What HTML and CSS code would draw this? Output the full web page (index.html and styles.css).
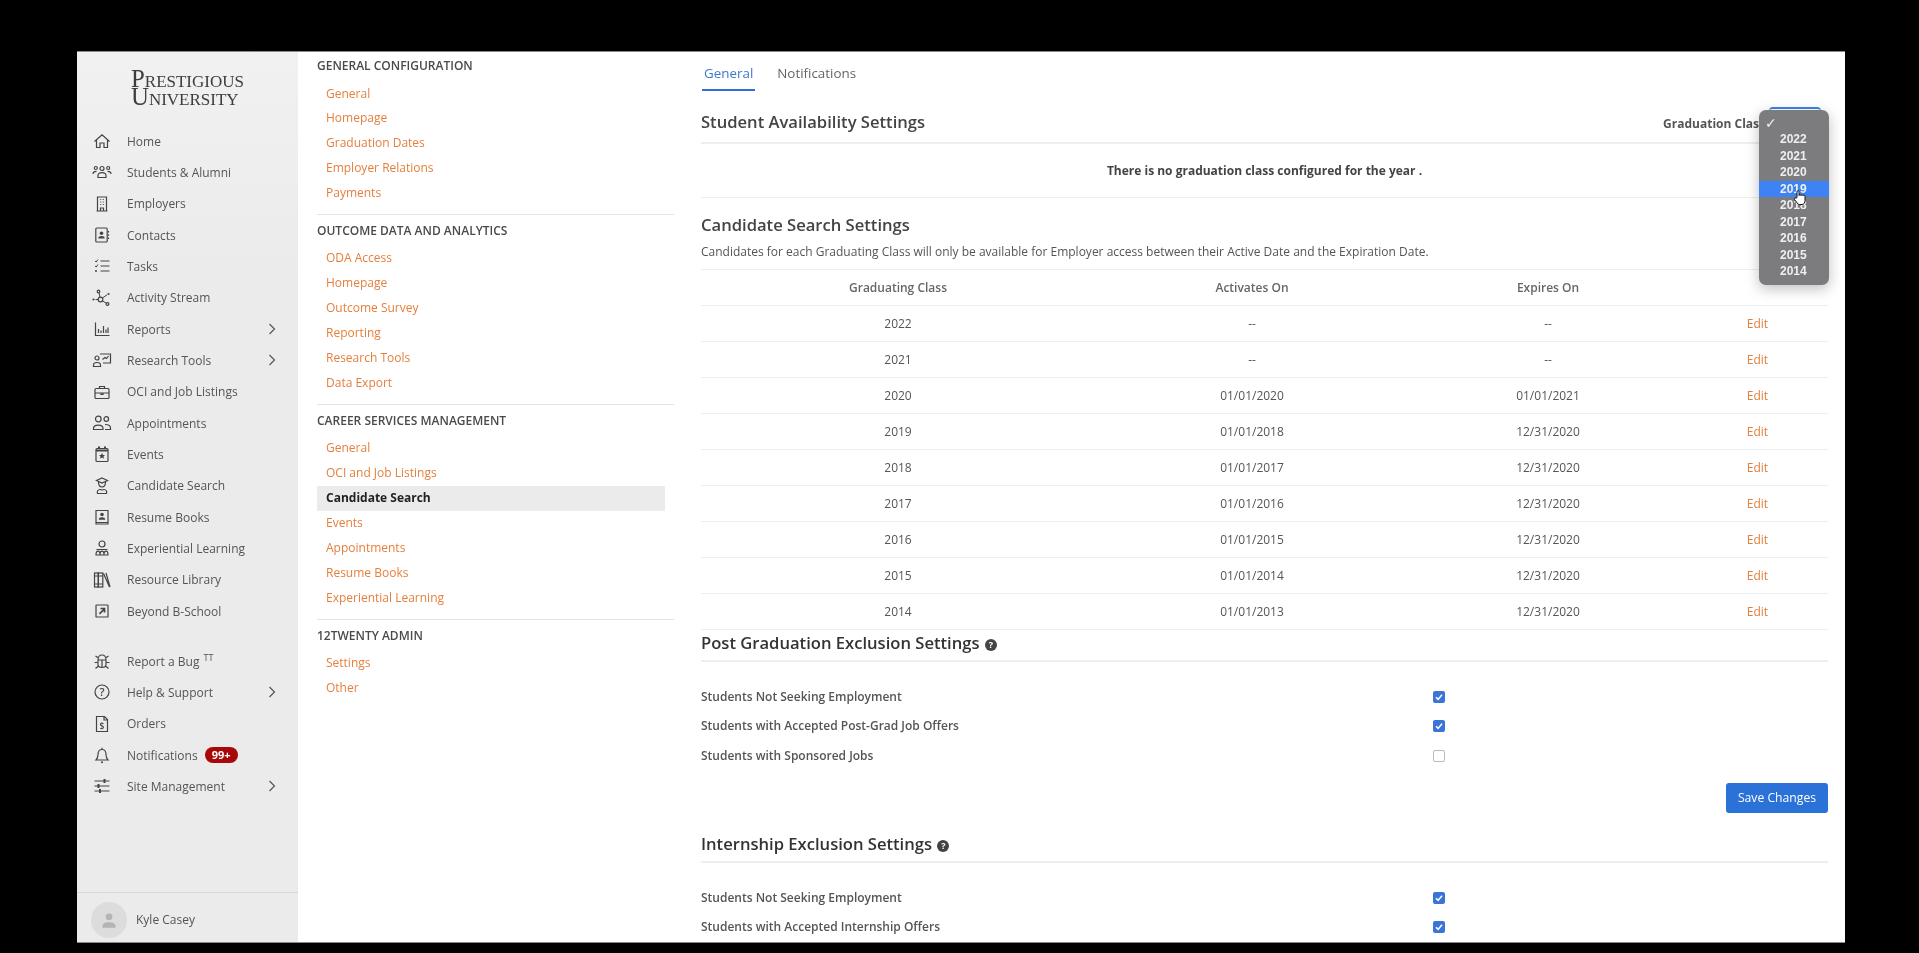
FILE: index.html
```html
<!DOCTYPE html>
<html lang="en">
<head>
    <meta charset="UTF-8">
    <title>Candidate Search Settings</title>
    <link rel="stylesheet" href="styles.css">
</head>
<body>
    <svg class="sprite" xmlns="http://www.w3.org/2000/svg">
        <symbol id="i-home" viewBox="0 0 20 20"><path d="M2.500 10.500L10 3.800l7.500 6.700M4.500 9v7.500H8V12h4v4.500h3.500V9"/></symbol>
        <symbol id="i-students" viewBox="0 0 20 20"><circle cx="10" cy="6.500" r="2"/><circle cx="3.800" cy="6" r="1.500"/><circle cx="16.200" cy="6" r="1.500"/><path d="M6 15.500v-1.800c0-2 2-3 4-3s4 1 4 3v1.800zM1 12c0-1.800 1.300-2.700 3.500-2.700M19 12c0-1.800-1.300-2.700-3.500-2.700"/></symbol>
        <symbol id="i-employers" viewBox="0 0 20 20"><path d="M5.500 17V3h9v14M4.500 17h11M8.500 17v-3h3v3"/><path class="thin" d="M8.300 5.500h1M10.800 5.500h1M8.300 8h1M10.800 8h1M8.300 10.500h1M10.800 10.500h1"/></symbol>
        <symbol id="i-contacts" viewBox="0 0 20 20"><rect x="3.800" y="3" width="11.400" height="14" rx="1"/><circle class="solid" cx="9.500" cy="8.300" r="1.800"/><path class="solid" d="M6.300 13.500c0-1.800 1.300-2.500 3.200-2.500s3.200.7 3.200 2.500z"/><path d="M16.500 6v1.500M16.500 9.300v1.500M16.500 12.600v1.500"/></symbol>
        <symbol id="i-tasks" viewBox="0 0 20 20"><path d="M8.500 5h9M8.500 10h9M8.500 15h9"/><path class="thin" d="M3 5l1.200 1L6 3.500M3 10l1.200 1L6 8.500"/><circle class="solid" cx="4" cy="15" r="1"/></symbol>
        <symbol id="i-activity" viewBox="0 0 20 20"><circle cx="6.500" cy="3.500" r="1.300"/><circle cx="8.500" cy="11.500" r="2.300"/><circle cx="15.500" cy="16" r="1.400"/><circle class="solid" cx="1.500" cy="11.500" r="1.100"/><circle class="solid" cx="16.500" cy="6" r="1.100"/><path class="thin" d="M7 4.800l1 4.400M10.500 13l3.800 2.100M10.500 10l4.500-3.200M3.500 11.500h2.500"/></symbol>
        <symbol id="i-reports" viewBox="0 0 20 20"><path d="M3.500 3.500v13h14M6.500 10v4M9 11.500V14M11.500 7v7M14 10.500V14M16 8.500V14"/></symbol>
        <symbol id="i-research" viewBox="0 0 20 20"><circle cx="5" cy="8" r="2"/><path d="M1.500 16.500v-1.300c0-1.700 1.600-2.700 3.500-2.700s3.500 1 3.500 2.700v1.300zM8 4h10.500v9H11M10.500 9.500l2.500-2 1.500 1 2-2.500"/></symbol>
        <symbol id="i-case" viewBox="0 0 20 20"><rect x="3" y="6.500" width="14" height="10" rx="1"/><path d="M7.500 6.500v-2h5v2M3 11h14M9 11v1.500h2V11"/></symbol>
        <symbol id="i-appts" viewBox="0 0 20 20"><circle cx="6.300" cy="6" r="2.800"/><circle cx="14.300" cy="6" r="2.300"/><path d="M1.500 16.500v-1c0-2 2-3.300 4.800-3.300s4.700 1.300 4.700 3.300v1zM13 11.500c3 0 5.500 1 5.500 3.500v1.500H13"/></symbol>
        <symbol id="i-events" viewBox="0 0 20 20"><rect x="4" y="4.500" width="12" height="13" rx="1"/><path d="M4 6.500h12M7 2.500v2M13 2.500v2" stroke-width="2"/><polygon class="solid" points="10,8.800 10.900,10.900 13,11.100 11.500,12.500 11.900,14.700 10,13.600 8.100,14.700 8.500,12.500 7,11.100 9.100,10.900"/></symbol>
        <symbol id="i-candidate" viewBox="0 0 20 20"><path d="M10 2l5.500 2.500L10 7 4.500 4.500zM6.500 6c0 3.500 1.500 5 3.500 5s3.500-1.500 3.500-5"/><path d="M5.500 17.500c-.8-2 .4-4 2.500-4s2 1 2 1 0-1 2-1 3.300 2 2.500 4z"/></symbol>
        <symbol id="i-resume" viewBox="0 0 20 20"><path d="M4 15.500V3.500h12v12M4 15.500V17h12v-1.500z"/><circle class="solid" cx="10" cy="7.500" r="1.800"/><path class="solid" d="M6.800 12.800c0-1.800 1.300-2.500 3.200-2.500s3.200.7 3.200 2.500z"/></symbol>
        <symbol id="i-exper" viewBox="0 0 20 20"><circle cx="10" cy="6" r="3"/><path d="M4.500 11.500h11M4 17c0-3 .8-3.800 2-3.800S8 14 8 17zM8 17c0-3 .8-3.800 2-3.800s2 .8 2 3.800zM12 17c0-3 .8-3.800 2-3.800s2 .8 2 3.800zM4 17h12"/></symbol>
        <symbol id="i-library" viewBox="0 0 20 20"><rect x="2.500" y="3" width="3.800" height="14"/><rect x="6.300" y="3" width="4.500" height="14"/><path d="M11.500 3.500l6 13.500M14 3l4 14M2.500 6h8.300M2.500 14h8.300"/></symbol>
        <symbol id="i-beyond" viewBox="0 0 20 20"><rect x="4" y="4" width="12" height="12" rx=".6"/><path d="M7.500 12.800l4.800-4.800M8.500 7.500h4v4" stroke-width="1.700"/></symbol>
        <symbol id="i-bug" viewBox="0 0 20 20"><path d="M6 9c0-3 1.500-5 4-5s4 2 4 5v4.500c0 2-1.800 3-4 3s-4-1-4-3zM6 9h8M10 9v7.500M6 11.500H2.500M14 11.500h3.500M6.500 7L3.500 5M13.500 7l3-2M6.500 15l-3 2.500M13.500 15l3 2.500"/></symbol>
        <symbol id="i-help" viewBox="0 0 20 20"><circle cx="10" cy="10" r="7"/><text class="glyph" x="10" y="14" text-anchor="middle" font-size="11">?</text></symbol>
        <symbol id="i-orders" viewBox="0 0 20 20"><path d="M4.500 2.500h8l3 3v12h-11zM12 2.500v3.500h3.500"/><text class="glyph" x="10" y="15" text-anchor="middle" font-size="8.500">$</text></symbol>
        <symbol id="i-bell" viewBox="0 0 20 20"><path d="M4 15c1.500-1.500 2-2.500 2-5.500C6 6.500 7.500 4.500 10 4.500s4 2 4 5c0 3 .5 4 2 5.500zM10 2.800v1.700"/><circle class="solid" cx="10" cy="17.300" r="1"/></symbol>
        <symbol id="i-sliders" viewBox="0 0 20 20"><path d="M2.500 5h15M2.500 10h15M2.500 15h15"/><path d="M12.500 3v4M6.500 8v4M8 13v4" stroke-width="2"/></symbol>
        <symbol id="i-chev" viewBox="0 0 8 12"><path d="M1.500 1l5 5-5 5"/></symbol>
        <symbol id="i-check" viewBox="0 0 12 12"><path d="M3 6.300l2.100 2.100L9 3.800"/></symbol>
    </svg>

    <div class="app">
        <aside class="sidebar">
            <div class="logo">Prestigious<br>University</div>
            <nav class="nav">
                <a class="nav-item"><svg class="ic"><use href="#i-home"/></svg>Home</a>
                <a class="nav-item"><svg class="ic"><use href="#i-students"/></svg>Students &amp; Alumni</a>
                <a class="nav-item"><svg class="ic"><use href="#i-employers"/></svg>Employers</a>
                <a class="nav-item"><svg class="ic"><use href="#i-contacts"/></svg>Contacts</a>
                <a class="nav-item"><svg class="ic"><use href="#i-tasks"/></svg>Tasks</a>
                <a class="nav-item"><svg class="ic"><use href="#i-activity"/></svg>Activity Stream</a>
                <a class="nav-item"><svg class="ic"><use href="#i-reports"/></svg>Reports<svg class="chev"><use href="#i-chev"/></svg></a>
                <a class="nav-item"><svg class="ic"><use href="#i-research"/></svg>Research Tools<svg class="chev"><use href="#i-chev"/></svg></a>
                <a class="nav-item"><svg class="ic"><use href="#i-case"/></svg>OCI and Job Listings</a>
                <a class="nav-item"><svg class="ic"><use href="#i-appts"/></svg>Appointments</a>
                <a class="nav-item"><svg class="ic"><use href="#i-events"/></svg>Events</a>
                <a class="nav-item"><svg class="ic"><use href="#i-candidate"/></svg>Candidate Search</a>
                <a class="nav-item"><svg class="ic"><use href="#i-resume"/></svg>Resume Books</a>
                <a class="nav-item"><svg class="ic"><use href="#i-exper"/></svg>Experiential Learning</a>
                <a class="nav-item"><svg class="ic"><use href="#i-library"/></svg>Resource Library</a>
                <a class="nav-item"><svg class="ic"><use href="#i-beyond"/></svg>Beyond B-School</a>
            </nav>
            <nav class="nav nav-lower">
                <a class="nav-item"><svg class="ic"><use href="#i-bug"/></svg>Report a Bug<sup class="tt">TT</sup></a>
                <a class="nav-item"><svg class="ic"><use href="#i-help"/></svg>Help &amp; Support<svg class="chev"><use href="#i-chev"/></svg></a>
                <a class="nav-item"><svg class="ic"><use href="#i-orders"/></svg>Orders</a>
                <a class="nav-item"><svg class="ic"><use href="#i-bell"/></svg>Notifications<span class="badge">99+</span></a>
                <a class="nav-item"><svg class="ic"><use href="#i-sliders"/></svg>Site Management<svg class="chev"><use href="#i-chev"/></svg></a>
            </nav>
            <div class="user">
                <span class="avatar">
                    <svg viewBox="0 0 20 20"><circle cx="10" cy="6.500" r="3.800"/><path d="M2.500 17.500c0-3.500 3-5 7.500-5s7.500 1.500 7.500 5c0 .6-.4 1-1 1h-13c-.6 0-1-.4-1-1z"/></svg>
                </span>
                Kyle Casey
            </div>
        </aside>

        <div class="subnav">
            <section class="subnav-group">
                <h4>General Configuration</h4>
                <a>General</a>
                <a>Homepage</a>
                <a>Graduation Dates</a>
                <a>Employer Relations</a>
                <a>Payments</a>
            </section>
            <section class="subnav-group">
                <h4>Outcome Data and Analytics</h4>
                <a>ODA Access</a>
                <a>Homepage</a>
                <a>Outcome Survey</a>
                <a>Reporting</a>
                <a>Research Tools</a>
                <a>Data Export</a>
            </section>
            <section class="subnav-group">
                <h4>Career Services Management</h4>
                <a>General</a>
                <a>OCI and Job Listings</a>
                <a class="active">Candidate Search</a>
                <a>Events</a>
                <a>Appointments</a>
                <a>Resume Books</a>
                <a>Experiential Learning</a>
            </section>
            <section class="subnav-group last">
                <h4>12Twenty Admin</h4>
                <a>Settings</a>
                <a>Other</a>
            </section>
        </div>

        <main class="main">
            <div class="tabs">
                <a class="tab active">General</a>
                <a class="tab">Notifications</a>
            </div>

            <div class="title-row first">
                <h2>Student Availability Settings</h2>
                <div class="grad-filter">
                    <label>Graduation Class</label>
                    <span class="select-box"></span>
                </div>
            </div>
            <p class="empty-note">There is no graduation class configured for the year .</p>

            <div class="title-row plain">
                <h2>Candidate Search Settings</h2>
            </div>
            <p class="desc">Candidates for each Graduating Class will only be available for Employer access between their Active Date and the Expiration Date.</p>

            <table class="grad-table">
                <colgroup>
                    <col class="c1"><col class="c2"><col class="c3"><col class="c4">
                </colgroup>
                <thead>
                    <tr><th>Graduating Class</th><th>Activates On</th><th>Expires On</th><th></th></tr>
                </thead>
                <tbody>
                    <tr><td>2022</td><td>--</td><td>--</td><td><a>Edit</a></td></tr>
                    <tr><td>2021</td><td>--</td><td>--</td><td><a>Edit</a></td></tr>
                    <tr><td>2020</td><td>01/01/2020</td><td>01/01/2021</td><td><a>Edit</a></td></tr>
                    <tr><td>2019</td><td>01/01/2018</td><td>12/31/2020</td><td><a>Edit</a></td></tr>
                    <tr><td>2018</td><td>01/01/2017</td><td>12/31/2020</td><td><a>Edit</a></td></tr>
                    <tr><td>2017</td><td>01/01/2016</td><td>12/31/2020</td><td><a>Edit</a></td></tr>
                    <tr><td>2016</td><td>01/01/2015</td><td>12/31/2020</td><td><a>Edit</a></td></tr>
                    <tr><td>2015</td><td>01/01/2014</td><td>12/31/2020</td><td><a>Edit</a></td></tr>
                    <tr><td>2014</td><td>01/01/2013</td><td>12/31/2020</td><td><a>Edit</a></td></tr>
                </tbody>
            </table>

            <div class="title-row exclusion">
                <h2>Post Graduation Exclusion Settings <span class="hint">?</span></h2>
            </div>
            <div class="checks">
                <div class="check-row">Students Not Seeking Employment<span class="box on"><svg><use href="#i-check"/></svg></span></div>
                <div class="check-row">Students with Accepted Post-Grad Job Offers<span class="box on"><svg><use href="#i-check"/></svg></span></div>
                <div class="check-row">Students with Sponsored Jobs<span class="box"></span></div>
            </div>
            <div class="actions"><button class="save">Save Changes</button></div>

            <div class="title-row exclusion second">
                <h2>Internship Exclusion Settings <span class="hint">?</span></h2>
            </div>
            <div class="checks">
                <div class="check-row">Students Not Seeking Employment<span class="box on"><svg><use href="#i-check"/></svg></span></div>
                <div class="check-row">Students with Accepted Internship Offers<span class="box on"><svg><use href="#i-check"/></svg></span></div>
            </div>

            <ul class="dropdown">
                <li class="tick">✓</li>
                <li>2022</li>
                <li>2021</li>
                <li>2020</li>
                <li class="hl">2019
                    <svg class="hand" viewBox="0 0 14 16"><path d="M4 8V2.200c0-1.400 2-1.400 2 0V6c0-1 2-1 2 0 0-1 2-1 2 .2 0-.8 2-.8 2 .5V11c0 2-1 4-3 4H6.500C5 15 4.500 14 3.500 12.500L1.500 10c-.8-1 .6-2.200 1.500-1.200z"/></svg>
                </li>
                <li>2018</li>
                <li>2017</li>
                <li>2016</li>
                <li>2015</li>
                <li>2014</li>
            </ul>
        </main>
    </div>
</body>
</html>
```

FILE: styles.css
```css
* {
    box-sizing: border-box;
}

html, body {
    height: 100%;
}

body {
    margin: 0;
    background: #000;
    padding: 51px 74px 10px 77px;
    font-family: 'Open Sans', 'Liberation Sans', sans-serif;
    font-size: 12px;
    color: #555;
    overflow: hidden;
}

.sprite {
    display: none;
}

.app {
    display: flex;
    height: 892px;
    background: #fff;
    border-top: 1px solid #8a8a8a;
    border-bottom: 1px solid #8a8a8a;
    overflow: hidden;
    filter: blur(0.35px);
}

/* left sidebar */
.sidebar {
    width: 221px;
    flex: none;
    display: flex;
    flex-direction: column;
    background: linear-gradient(#f1f1f1, #ebebeb 25%);
}

.logo {
    height: 73.5px;
    padding: 18px 0 0 54px;
    font-family: 'Liberation Serif', serif;
    font-variant: small-caps;
    font-size: 24.8px;
    line-height: 18px;
    color: #3d3d3d;
}

.nav {
    display: flex;
    flex-direction: column;
}

.nav-lower {
    margin-top: 18.7px;
}

.nav-item {
    height: 31.33px;
    display: flex;
    align-items: center;
    padding-left: 15px;
    font-size: 12px;
    color: #555;
    white-space: nowrap;
}

.ic {
    width: 20px;
    height: 20px;
    flex: none;
    margin-right: 15px;
    fill: none;
    stroke: #444;
    stroke-width: 1.2;
}

.sprite .solid {
    fill: #444;
    stroke: none;
}

.sprite .thin {
    stroke-width: 1;
}

.sprite .glyph {
    fill: #444;
    stroke: none;
    font-family: 'Open Sans', sans-serif;
    font-weight: 600;
}

.chev {
    width: 8px;
    height: 12px;
    margin-left: auto;
    margin-right: 22px;
    fill: none;
    stroke: #555;
    stroke-width: 1.2;
}

.tt {
    font-size: 9px;
    line-height: 1;
    margin-left: 4px;
    position: relative;
    top: -4px;
}

.badge {
    margin-left: 7px;
    padding: 0 7px;
    height: 16px;
    line-height: 16px;
    border-radius: 8px;
    background: #a80808;
    color: #fff;
    font-size: 11px;
    font-weight: 700;
}

.user {
    margin-top: auto;
    height: 50px;
    padding: 4px 0 0 14px;
    border-top: 1px solid #d8d8d8;
    display: flex;
    align-items: center;
    gap: 9px;
    font-size: 12px;
    color: #555;
}

.avatar {
    width: 36px;
    height: 36px;
    border-radius: 50%;
    background: #dcdcdc;
    display: flex;
    align-items: center;
    justify-content: center;
}

.avatar svg {
    width: 18px;
    height: 18px;
    fill: #b4b4b4;
}

/* settings links */
.subnav {
    width: 403px;
    flex: none;
    padding: 4px 0 0 19px;
}

.subnav-group {
    width: 357px;
    padding-bottom: 8px;
    margin-bottom: 6px;
    border-bottom: 1px solid #e4e4e4;
}

.subnav-group.last {
    border-bottom: none;
}

.subnav-group h4 {
    margin: 0 0 5.5px;
    height: 20px;
    line-height: 20px;
    font-size: 12px;
    font-weight: 600;
    text-transform: uppercase;
    color: #4a4a4a;
}

.subnav-group a {
    display: block;
    width: 348px;
    height: 24.9px;
    line-height: 24.9px;
    padding-left: 9px;
    font-size: 12px;
    color: #e57f3c;
}

.subnav-group a.active {
    background: #ebebeb;
    color: #222;
    font-weight: 700;
}

/* main column */
.main {
    position: relative;
    flex: 1;
    padding-right: 17px;
    overflow: hidden;
}

.tabs {
    display: flex;
    gap: 20px;
    height: 39px;
    padding-left: 1px;
}

.tab {
    height: 39px;
    padding: 12px 2px 0;
    font-size: 13.4px;
    line-height: 18px;
    color: #666;
}

.tab.active {
    color: #3f78c9;
    border-bottom: 2px solid #2f6fd6;
}

.title-row {
    display: flex;
    justify-content: space-between;
    align-items: center;
    border-bottom: 2px solid #eee;
}

.title-row h2 {
    margin: 0;
    font-size: 16.6px;
    font-weight: 600;
    color: #444;
}

.title-row.first {
    height: 53px;
    padding-top: 12px;
}

.title-row.first h2 {
    margin-bottom: 2px;
}

.title-row.plain {
    height: 40px;
    padding-top: 13px;
    border-bottom: none;
}

.grad-filter {
    display: flex;
    align-items: center;
    margin-right: 7px;
    gap: 4px;
    font-weight: 700;
    color: #555;
}

.grad-filter label {
    padding-top: 2px;
}

.select-box {
    width: 52px;
    height: 24px;
    margin-top: -7px;
    border-top: 2px solid #3b82e6;
    border-radius: 4px;
}

.empty-note {
    margin: 0;
    height: 54px;
    line-height: 54px;
    text-align: center;
    font-weight: 700;
    color: #444;
    border-bottom: 1px solid #eee;
}

.desc {
    margin: 0;
    height: 32px;
    line-height: 20px;
    padding-top: 4px;
    border-bottom: 1px solid #eee;
}

.grad-table {
    width: 100%;
    table-layout: fixed;
    border-collapse: collapse;
}

.c1 { width: 394px; }
.c2 { width: 314px; }
.c3 { width: 278px; }

.grad-table th,
.grad-table td {
    height: 36px;
    padding: 0;
    text-align: center;
    font-weight: 400;
    border-bottom: 1px solid #eee;
}

.grad-table th {
    height: 35px;
    color: #666;
    font-weight: 600;
}

.grad-table a {
    color: #e57f3c;
}

.title-row.exclusion {
    height: 32px;
    padding-bottom: 5px;
}

.title-row.exclusion h2 {
    color: #333;
}

.title-row.second {
    margin-top: 16px;
    height: 34px;
    padding-bottom: 3px;
}

.hint {
    display: inline-block;
    width: 12px;
    height: 12px;
    margin-left: 1px;
    border-radius: 50%;
    background: #444;
    color: #fff;
    font-size: 9px;
    font-weight: 700;
    line-height: 12px;
    text-align: center;
    vertical-align: 1px;
}

.checks {
    padding-top: 20px;
}

.check-row {
    position: relative;
    display: flex;
    align-items: center;
    height: 29.5px;
    font-weight: 600;
    color: #555;
}

.box {
    position: absolute;
    left: 732px;
    width: 12px;
    height: 12px;
    margin-top: 1px;
    border: 1px solid #bbb;
    border-radius: 2px;
    background: #fff;
}

.box.on {
    border: none;
    background: #3b74d8;
}

.box svg {
    display: block;
    width: 12px;
    height: 12px;
    fill: none;
    stroke: #fff;
    stroke-width: 1.6;
}

.actions {
    display: flex;
    justify-content: flex-end;
    padding-top: 12.5px;
}

.save {
    width: 102px;
    height: 30px;
    border: none;
    border-radius: 3px;
    background: #2a72d8;
    color: #fff;
    font-family: inherit;
    font-size: 12.2px;
}

/* native select popup, open over the header */
.dropdown {
    position: absolute;
    top: 58px;
    right: 16px;
    width: 70px;
    height: 175px;
    margin: 0;
    padding: 4.5px 0 0;
    list-style: none;
    background: #7c7c7f;
    border-radius: 7px;
    box-shadow: 0 4px 14px rgba(0, 0, 0, 0.25);
    font-family: 'Liberation Sans', sans-serif;
    font-size: 12px;
    font-weight: 700;
    color: #efefef;
}

.dropdown li {
    position: relative;
    height: 16.5px;
    line-height: 16.5px;
    padding-left: 21px;
}

.dropdown li.tick {
    padding-left: 6px;
    font-family: 'DejaVu Sans', sans-serif;
    font-size: 14px;
    font-weight: 400;
}

.dropdown li.hl {
    z-index: 1;
    background: #3d83f5;
}

.hand {
    position: absolute;
    top: 8px;
    left: 34px;
    width: 14px;
    height: 17px;
    fill: #fff;
    stroke: #111;
    stroke-width: 1;
}
```
